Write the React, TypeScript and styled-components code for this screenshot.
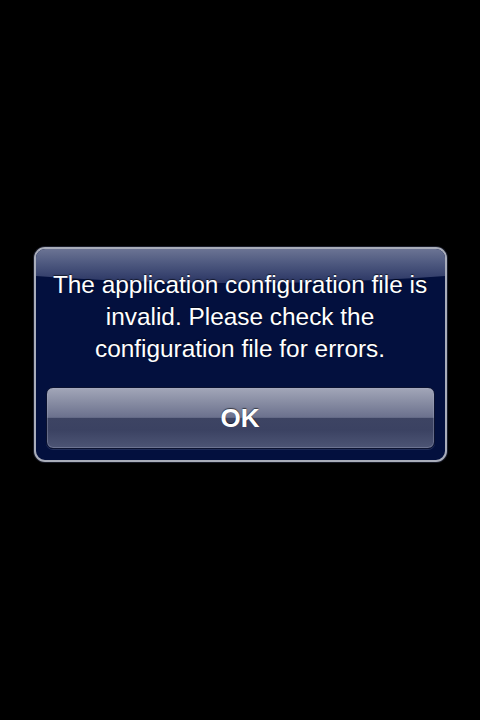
import React from "react";
import styled, { createGlobalStyle } from "styled-components";

const Global = createGlobalStyle`
  html, body { margin: 0; padding: 0; background: #000; }
  body { font-family: "Liberation Sans", Arial, Helvetica, sans-serif; }
`;

const Screen = styled.div`
  width: 480px;
  height: 720px;
  background: #000;
  display: flex;
  flex-direction: column;
  align-items: center;
  padding-top: 247px;
  box-sizing: border-box;
`;

const AlertBox = styled.div`
  position: relative;
  width: 413px;
  box-sizing: border-box;
  border: 2px solid #a9adba;
  border-radius: 11px;
  background: #03103e;
  box-shadow: 0 0 0 1px #1a1d2a, 0 2px 4px rgba(0, 0, 0, 0.8);
  padding: 20px 10px 11px;
  display: flex;
  flex-direction: column;
  gap: 22px;
  overflow: hidden;

  &::before {
    content: "";
    position: absolute;
    left: -400px;
    right: -400px;
    top: -200px;
    height: 234px;
    border-radius: 50%;
    background: linear-gradient(
      to bottom,
      #727a98 84%,
      #4c577e 92%,
      #2a3563 100%
    );
    pointer-events: none;
  }
`;

const Message = styled.p`
  position: relative;
  margin: 0;
  color: #fff;
  font-size: 24.4px;
  line-height: 32px;
  text-align: center;
  text-shadow: 0 -1px 1px rgba(0, 0, 0, 0.6);
`;

const OkButton = styled.button`
  position: relative;
  height: 62px;
  width: 100%;
  box-sizing: border-box;
  border: 1px solid #0b1230;
  border-radius: 7px;
  box-shadow: inset 0 0 0 1px rgba(170, 176, 200, 0.35), 0 1px 0 rgba(120, 130, 170, 0.25);
  background: linear-gradient(
    to bottom,
    #a2a6b8 0%,
    #868ba2 25%,
    #6b718d 49%,
    #3d4463 50%,
    #3b4262 70%,
    #4d5575 100%
  );
  color: #fff;
  font-family: "Liberation Sans", Arial, Helvetica, sans-serif;
  font-weight: bold;
  font-size: 26px;
  text-shadow: 0 -1px 1px rgba(0, 0, 0, 0.55);
  padding: 0;
  cursor: pointer;
`;

export default function App() {
  return (
    <>
      <Global />
      <Screen>
        <AlertBox>
          <Message>
            The application configuration file is
            <br />
            invalid. Please check the
            <br />
            configuration file for errors.
          </Message>
          <OkButton>OK</OkButton>
        </AlertBox>
      </Screen>
    </>
  );
}
